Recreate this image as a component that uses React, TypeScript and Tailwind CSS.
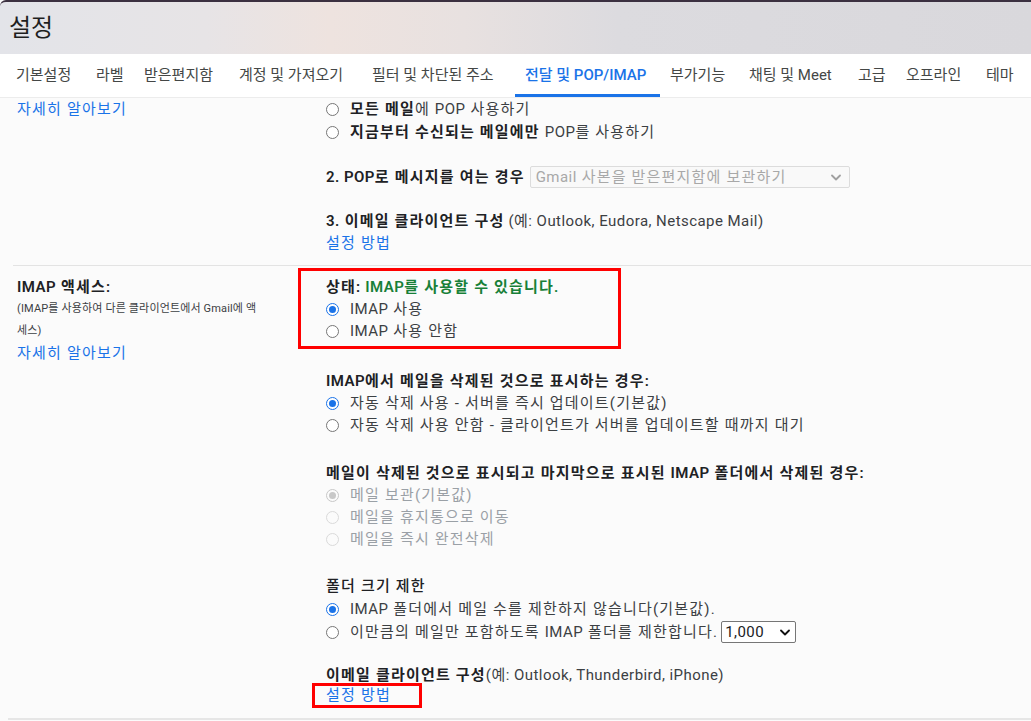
import React from "react";

const Radio = ({ checked = false, disabled = false }: { checked?: boolean; disabled?: boolean }) => {
  if (disabled) {
    return (
      <span className={`flex h-[13px] w-[13px] shrink-0 items-center justify-center rounded-full border ${checked ? "border-[#c8c8c8]" : "border-[#dadada]"} bg-[#fbfbfb]`}>
        {checked && <span className="h-[7px] w-[7px] rounded-full bg-[#c8c8c8]" />}
      </span>
    );
  }
  return (
    <span className={`flex h-[13px] w-[13px] shrink-0 items-center justify-center rounded-full ${checked ? "border-[1.5px] border-[#1a73e8]" : "border border-[#767676]"} bg-white`}>
      {checked && <span className="h-[7px] w-[7px] rounded-full bg-[#1a73e8]" />}
    </span>
  );
};

const L = ({ children }: { children: React.ReactNode }) => <span className="tracking-[0.45px]">{children}</span>;

const Row = ({ children, className = "" }: { children: React.ReactNode; className?: string }) => (
  <div className={`flex h-[22px] items-center whitespace-nowrap ${className}`}>{children}</div>
);

const RadioRow = ({ checked, disabled, children, className = "" }: { checked?: boolean; disabled?: boolean; children: React.ReactNode; className?: string }) => (
  <Row className={className}>
    <Radio checked={checked} disabled={disabled} />
    <span className={`ml-[11px] whitespace-nowrap ${disabled ? "text-[#9aa0a6]" : "text-[#3c4043]"}`}>{children}</span>
  </Row>
);

const Chevron = ({ color }: { color: string }) => (
  <svg width="10" height="7" viewBox="0 0 10 7" fill="none">
    <path d="M1 1.5 L5 5.5 L9 1.5" stroke={color} strokeWidth="1.8" strokeLinecap="round" strokeLinejoin="round" />
  </svg>
);

const tabs: { t: string; w: string }[] = [
  { t: "기본설정", w: "w-[80px]" },
  { t: "라벨", w: "w-[48px]" },
  { t: "받은편지함", w: "w-[95px]" },
  { t: "계정 및 가져오기", w: "w-[133px]" },
  { t: "필터 및 차단된 주소", w: "w-[153px]" },
  { t: "전달 및 POP/IMAP", w: "w-[145px]" },
  { t: "부가기능", w: "w-[79px]" },
  { t: "채팅 및 Meet", w: "w-[109px]" },
  { t: "고급", w: "w-[48px]" },
  { t: "오프라인", w: "w-[80px]" },
  { t: "테마", w: "w-[60px]" },
];

export default function App() {
  return (
    <div
      className="relative h-[721px] w-[1031px] overflow-hidden bg-[#fbfbfb] text-[15px] tracking-[1.2px]"
      style={{ fontFamily: 'Roboto, "Noto Sans CJK KR", "Noto Sans", sans-serif' }}
    >
      {/* Header */}
      <div className="h-[54px] rounded-tl-[6px] border-t-2 border-[#3b3040] bg-[linear-gradient(90deg,#e3e4e9_0%,#e7e4e6_20%,#eee3df_32%,#e8e1e0_45%,#dcdbdf_60%,#d9d8dc_100%)]">
        <div className="flex h-[52px] items-center pl-[9px] text-[24px] tracking-normal text-[#1f1f1f]">설정</div>
      </div>

      {/* Tabs */}
      <div className="flex h-[44px] items-stretch border-b border-[#ececec] bg-white pl-[6px] tracking-normal">
        {tabs.map(({ t, w }) => {
          const active = t === "전달 및 POP/IMAP";
          return (
            <div
              key={t}
              className={`relative flex shrink-0 items-center whitespace-nowrap pl-[10px] ${w} ${active ? "font-medium text-[#1a73e8]" : "text-[#444746]"}`}
            >
              {t}
              {active && <span className="absolute bottom-0 left-0 right-0 h-[3px] bg-[#1a73e8]" />}
            </div>
          );
        })}
      </div>

      {/* POP section */}
      <div className="flex">
        <div className="w-[326px] shrink-0 pl-[17px]">
          <Row className="text-[#1a73e8]">자세히 알아보기</Row>
        </div>
        <div>
          <RadioRow>
            <b className="font-semibold text-[#202124]">모든 메일</b>에 <L>POP</L> 사용하기
          </RadioRow>
          <RadioRow className="mt-px">
            <b className="font-semibold text-[#202124]">지금부터 수신되는 메일에만</b> <L>POP</L>를 사용하기
          </RadioRow>
          <Row className="mt-[23px]">
            <span className="font-semibold text-[#202124]"><L>2. POP</L>로 메시지를 여는 경우</span>
            <div className="ml-[5px] flex h-[22px] w-[320px] items-center justify-between rounded-[2px] border border-[#dcdcdc] bg-[#f9f9f9] pl-[5px] pr-[8px] text-[#a8a8a8]">
              <span className="whitespace-nowrap"><L>Gmail</L> 사본을 받은편지함에 보관하기</span>
              <Chevron color="#a0a0a0" />
            </div>
          </Row>
          <Row className="mt-[22px]">
            <span className="font-semibold text-[#202124]"><L>3.</L> 이메일 클라이언트 구성</span>
            <span className="ml-[4px] text-[#3c4043]"><L>(예: Outlook, Eudora, Netscape Mail)</L></span>
          </Row>
          <Row className="text-[#1a73e8]">설정 방법</Row>
        </div>
      </div>

      <div className="ml-[13px] mt-[11px] h-px bg-[#e3e3e3]" />

      {/* IMAP section */}
      <div className="flex">
        <div className="w-[326px] shrink-0 pl-[17px] pt-[10px]">
          <Row className="font-semibold text-[#202124]"><L>IMAP</L>&nbsp;액세스:</Row>
          <div className="text-[11px] leading-[22px] tracking-[0.15px] text-[#3c4043]">
            <div className="whitespace-nowrap">(IMAP를 사용하여 다른 클라이언트에서 Gmail에 액</div>
            <div>세스)</div>
          </div>
          <Row className="text-[#1a73e8]">자세히 알아보기</Row>
        </div>
        <div className="pt-[2px]">
          <div className="-ml-[28px] w-[323px] border-[3px] border-[#ff0000] pb-[4px] pl-[25px] pt-[5px]">
            <Row>
              <span className="font-semibold text-[#202124]">상태:</span>
              <span className="ml-[4px] font-semibold text-[#188038]"><L>IMAP</L>를 사용할 수 있습니다.</span>
            </Row>
            <RadioRow checked><L>IMAP</L> 사용</RadioRow>
            <RadioRow><L>IMAP</L> 사용 안함</RadioRow>
          </div>

          <Row className="mt-[21px] font-semibold text-[#202124]"><L>IMAP</L>에서 메일을 삭제된 것으로 표시하는 경우:</Row>
          <RadioRow checked>자동 삭제 사용 - 서버를 즉시 업데이트(기본값)</RadioRow>
          <RadioRow>자동 삭제 사용 안함 - 클라이언트가 서버를 업데이트할 때까지 대기</RadioRow>

          <Row className="mt-[26px] font-semibold text-[#202124]">
            메일이 삭제된 것으로 표시되고 마지막으로 표시된&nbsp;<L>IMAP</L>&nbsp;폴더에서 삭제된 경우:
          </Row>
          <RadioRow checked disabled>메일 보관(기본값)</RadioRow>
          <RadioRow disabled>메일을 휴지통으로 이동</RadioRow>
          <RadioRow disabled>메일을 즉시 완전삭제</RadioRow>

          <Row className="mt-[25px] font-medium text-[#202124]">폴더 크기 제한</Row>
          <RadioRow checked className="mt-px"><L>IMAP</L> 폴더에서 메일 수를 제한하지 않습니다(기본값).</RadioRow>
          <Row className="mt-px">
            <Radio />
            <span className="ml-[11px] whitespace-nowrap text-[#3c4043]">이만큼의 메일만 포함하도록 <L>IMAP</L> 폴더를 제한합니다.</span>
            <div className="ml-[3px] flex h-[22px] w-[75px] items-center justify-between rounded-[2px] border border-[#767676] bg-white pl-[3px] pr-[5px] text-[#202124]">
              <L>1,000</L>
              <Chevron color="#111" />
            </div>
          </Row>

          <Row className="mt-[21px]">
            <span className="font-semibold text-[#202124]">이메일 클라이언트 구성</span>
            <span className="text-[#3c4043]"><L>(예: Outlook, Thunderbird, iPhone)</L></span>
          </Row>
          <div className="-ml-[14px] mt-[-3px] w-[110px] border-[3px] border-[#ff0000] pl-[11px]">
            <div className="flex h-[19px] items-center text-[#1a73e8]">설정 방법</div>
          </div>
        </div>
      </div>

      <div className="ml-[8px] mt-[10px] h-[2px] bg-[#e6e6e6]" />
    </div>
  );
}
